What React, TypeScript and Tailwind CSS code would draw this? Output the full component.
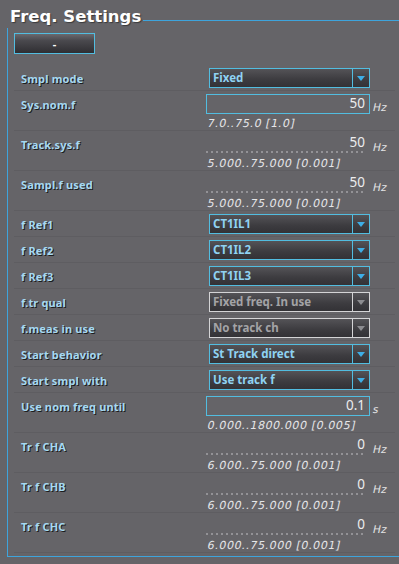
import React from "react";

type Row =
  | { kind: "select"; label: string; value: string; disabled?: boolean }
  | { kind: "input"; label: string; value: string; unit: string; range: string }
  | { kind: "ro"; label: string; value: string; unit: string; range: string };

const rows: Row[] = [
  { kind: "select", label: "Smpl mode", value: "Fixed" },
  { kind: "input", label: "Sys.nom.f", value: "50", unit: "Hz", range: "7.0..75.0 [1.0]" },
  { kind: "ro", label: "Track.sys.f", value: "50", unit: "Hz", range: "5.000..75.000 [0.001]" },
  { kind: "ro", label: "Sampl.f used", value: "50", unit: "Hz", range: "5.000..75.000 [0.001]" },
  { kind: "select", label: "f Ref1", value: "CT1IL1" },
  { kind: "select", label: "f Ref2", value: "CT1IL2" },
  { kind: "select", label: "f Ref3", value: "CT1IL3" },
  { kind: "select", label: "f.tr qual", value: "Fixed freq. In use", disabled: true },
  { kind: "select", label: "f.meas in use", value: "No track ch", disabled: true },
  { kind: "select", label: "Start behavior", value: "St Track direct" },
  { kind: "select", label: "Start smpl with", value: "Use track f" },
  { kind: "input", label: "Use nom freq until", value: "0.1", unit: "s", range: "0.000..1800.000 [0.005]" },
  { kind: "ro", label: "Tr f CHA", value: "0", unit: "Hz", range: "6.000..75.000 [0.001]" },
  { kind: "ro", label: "Tr f CHB", value: "0", unit: "Hz", range: "6.000..75.000 [0.001]" },
  { kind: "ro", label: "Tr f CHC", value: "0", unit: "Hz", range: "6.000..75.000 [0.001]" },
];

const noto = { fontFamily: '"Noto Sans", "Open Sans", sans-serif' };
const dejavu = { fontFamily: '"DejaVu Sans", sans-serif' };

function Label({ text }: { text: string }) {
  return (
    <div className="w-[192px] pl-[7px] h-[20px] flex items-center shrink-0">
      <span
        className="text-[11px] font-bold text-[#a6d9f2] [text-shadow:1px_1px_0_#1c1c1e] leading-none tracking-[0.15px]"
        style={noto}
      >
        {text}
      </span>
    </div>
  );
}

function Select({ value, disabled }: { value: string; disabled?: boolean }) {
  const border = disabled ? "border-[#d4d4d6]" : "border-[#52bde0]";
  return (
    <div
      className={`ml-[3px] w-[161px] h-[20px] border ${border} flex bg-[linear-gradient(to_bottom,#545357_0%,#3c3b3f_60%,#333236_100%)]`}
    >
      <div
        className={`flex-1 flex items-center pl-[3px] text-[11.5px] font-bold leading-none ${
          disabled ? "text-[#a3a3a6]" : "text-[#8fd2f2]"
        }`}
        style={noto}
      >
        {value}
      </div>
      <div className={`w-[17px] border-l ${border} flex items-center justify-center`}>
        <svg width="8" height="5" viewBox="0 0 8 5">
          <path d="M0 0H8L4 5Z" fill={disabled ? "#8c8c90" : "#3eaee6"} />
        </svg>
      </div>
    </div>
  );
}

function Unit({ u }: { u: string }) {
  return (
    <div className="ml-[3px] pt-[2px] leading-none">
      <span className="inline-block -skew-x-12 text-[10.5px] tracking-[0.5px] text-[#e4e4e6]" style={dejavu}>
        {u}
      </span>
    </div>
  );
}

function RowView({ r }: { r: Row }) {
  if (r.kind === "select") {
    return (
      <div className="flex h-[26px] pt-[3px] border-b border-[#5e5d61]">
        <Label text={r.label} />
        <Select value={r.value} disabled={r.disabled} />
      </div>
    );
  }
  return (
    <div className="flex h-[40px] pt-[3px] border-b border-[#5e5d61]">
      <Label text={r.label} />
      <div className="flex flex-col w-[190px]">
        <div className="flex items-center h-[20px]">
          {r.kind === "input" ? (
            <div
              className="w-[164px] h-[20px] border border-[#52bde0] flex items-center justify-end pr-[4px] text-[13.5px] text-[#ececee] leading-none"
              style={noto}
            >
              {r.value}
            </div>
          ) : (
            <div className="w-[164px] h-[20px] flex flex-col justify-end">
              <div
                className="flex-1 flex items-center justify-end pr-[5px] text-[13.5px] text-[#ececee] leading-none"
                style={noto}
              >
                {r.value}
              </div>
              <div className="mr-[4px] h-[2px] bg-[linear-gradient(to_right,#939296_2px,transparent_2px)] bg-[length:5px_2px] mb-[1px]" />
            </div>
          )}
          <Unit u={r.unit} />
        </div>
        <div className="h-[14px] leading-[14px] whitespace-nowrap">
          <span
            className="inline-block -skew-x-12 origin-bottom-left text-[11px] tracking-[0.6px] text-[#e6e6e8]"
            style={dejavu}
          >
            {r.range}
          </span>
        </div>
      </div>
    </div>
  );
}

export default function App() {
  return (
    <div className="w-[399px] h-[564px] bg-[#656468] overflow-hidden">
      <div className="flex h-[28px]">
        <div
          className="pl-[10px] pr-[2px] text-[16.5px] font-bold text-white leading-none pt-[9px] [text-shadow:1px_1px_1px_#3a3a3c] whitespace-nowrap"
          style={dejavu}
        >
          Freq. Settings
        </div>
        <div className="flex-1 h-[21px] border-b border-[#3ea4dc]" />
      </div>
      <div className="ml-[7px] w-[420px] h-[529px] border-l border-b border-[#3ea4dc] pl-[6px]">
        <div className="pt-[5px] flex">
          <button
            className="w-[81px] h-[21px] border border-[#52bde0] bg-[linear-gradient(to_bottom,#6a696e_0%,#4a494e_35%,#2f2e32_100%)] text-white text-[11px] font-bold leading-none"
            style={noto}
          >
            -
          </button>
        </div>
        <div className="mt-[11px] w-[381px]">
          {rows.map((r, i) => (
            <RowView key={i} r={r} />
          ))}
        </div>
      </div>
    </div>
  );
}
